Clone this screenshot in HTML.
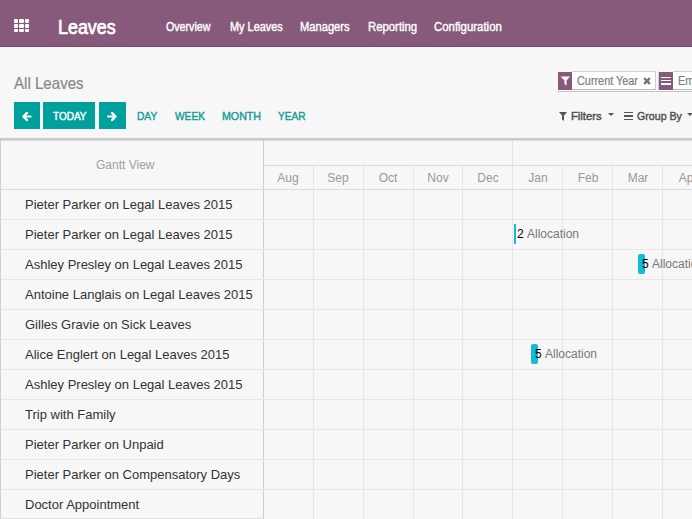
<!DOCTYPE html>
<html>
<head>
<meta charset="utf-8">
<style>
*{box-sizing:border-box;margin:0;padding:0}
html,body{width:692px;height:519px;overflow:hidden;background:#f7f7f7;font-family:"Liberation Sans",sans-serif}
.abs{position:absolute}
#nav{position:absolute;left:0;top:0;width:692px;height:47px;background:#875A7B;border-bottom:1px solid #74496a}
.sq{position:absolute;width:4.3px;height:3.5px;background:#fff;border-radius:1px}
.menu{position:absolute;top:19.2px;color:#fff;font-size:12.4px;line-height:16px;white-space:nowrap;-webkit-text-stroke:0.4px #fff}
#brand{position:absolute;left:58px;top:15px;color:#fff;font-size:20px;line-height:24px;white-space:nowrap;-webkit-text-stroke:0.7px #fff}
#title{position:absolute;left:14px;top:73px;color:#888;font-size:16.5px;line-height:20px;white-space:nowrap;-webkit-text-stroke:0.2px #888}
.btn{position:absolute;top:102px;height:27px;background:#00A09D}
.lnk{position:absolute;top:108.8px;color:#1a9c99;font-size:11.5px;line-height:14px;white-space:nowrap;-webkit-text-stroke:0.45px #1a9c99}
.facet{position:absolute;top:71px;height:19px;border:1px solid #cfcfcf;border-left:none;border-bottom-color:#bdbdbd;background:#fdfdfd}
.fic{position:absolute;top:72px;height:18px;width:14px;background:#875A7B}
.ftxt{position:absolute;top:74px;color:#808080;font-size:12px;line-height:14px;white-space:nowrap;-webkit-text-stroke:0.2px #808080;transform:scaleX(0.905);transform-origin:0 0}
.dd{position:absolute;top:109.3px;color:#505050;font-size:11.5px;line-height:14px;white-space:nowrap;-webkit-text-stroke:0.45px #505050;transform-origin:0 0}
.hl{position:absolute;height:1px}
.vl{position:absolute;width:1px}
.row{position:absolute;left:25px;color:#333;font-size:13px;line-height:16px;white-space:nowrap}
.mon{position:absolute;top:171px;width:50px;text-align:center;color:#999;font-size:12px;line-height:14px}
.bar{position:absolute;height:20px;background:#14bbd6;border-radius:2px}
.num{position:absolute;color:#000;font-size:12px;line-height:14px}
.alloc{position:absolute;color:#777;font-size:12px;line-height:14px;white-space:nowrap}
</style>
</head>
<body>
<div id="nav">
  <div class="sq" style="left:13.75px;top:19.35px"></div>
  <div class="sq" style="left:19.25px;top:19.35px"></div>
  <div class="sq" style="left:24.85px;top:19.35px"></div>
  <div class="sq" style="left:13.75px;top:24.10px"></div>
  <div class="sq" style="left:19.25px;top:24.10px"></div>
  <div class="sq" style="left:24.85px;top:24.10px"></div>
  <div class="sq" style="left:13.75px;top:28.75px"></div>
  <div class="sq" style="left:19.25px;top:28.75px"></div>
  <div class="sq" style="left:24.85px;top:28.75px"></div>
  <div id="brand" style="transform:scaleX(0.895);transform-origin:0 0">Leaves</div>
  <div class="menu" style="left:166px;transform:scaleX(0.86);transform-origin:0 0">Overview</div>
  <div class="menu" style="left:230px;transform:scaleX(0.88);transform-origin:0 0">My Leaves</div>
  <div class="menu" style="left:300px;transform:scaleX(0.9);transform-origin:0 0">Managers</div>
  <div class="menu" style="left:368px;transform:scaleX(0.915);transform-origin:0 0">Reporting</div>
  <div class="menu" style="left:434px;transform:scaleX(0.92);transform-origin:0 0">Configuration</div>
</div>

<div id="title" style="transform:scaleX(0.915);transform-origin:0 0">All Leaves</div>

<div class="btn" style="left:14px;width:26px">
  <svg class="abs" style="left:8.4px;top:9px" width="11" height="11" viewBox="0 0 11 11"><path d="M8.6 5.5H1.5M5 1.9L1.3 5.5L5 9.1" stroke="#fff" stroke-width="2.2" fill="none" stroke-linecap="round" stroke-linejoin="round"/></svg>
</div>
<div class="btn" style="left:43px;width:52px"><div class="abs" style="left:9.5px;top:6.8px;color:#fff;font-size:11.5px;line-height:14px;-webkit-text-stroke:0.45px #fff;transform:scaleX(0.87);transform-origin:0 0">TODAY</div></div>
<div class="btn" style="left:99px;width:27px">
  <svg class="abs" style="left:8px;top:9px" width="11" height="11" viewBox="0 0 11 11"><path d="M1.1 5.5H8.2M5 1.9L8.6 5.5L5 9.1" stroke="#fff" stroke-width="2.2" fill="none" stroke-linecap="round" stroke-linejoin="round"/></svg>
</div>
<div class="lnk" style="left:137px;transform:scaleX(0.885);transform-origin:0 0">DAY</div>
<div class="lnk" style="left:175px;transform:scaleX(0.885);transform-origin:0 0">WEEK</div>
<div class="lnk" style="left:221.5px;transform:scaleX(0.925);transform-origin:0 0">MONTH</div>
<div class="lnk" style="left:277.5px;transform:scaleX(0.88);transform-origin:0 0">YEAR</div>

<!-- search facets -->
<div class="hl" style="left:558px;top:91px;width:134px;background:#c4c4c4"></div>
<div class="facet" style="left:572px;width:84px"></div>
<div class="fic" style="left:558px"></div>
<svg class="abs" style="left:560px;top:76px" width="11" height="10" viewBox="0 0 11 10"><path d="M0.5 0.5H10L6.5 4.5V9.5L4.5 8V4.5Z" fill="#fff"/></svg>
<div class="ftxt" style="left:577px">Current Year</div>
<svg class="abs" style="left:643px;top:77px" width="8" height="8" viewBox="0 0 8 8"><path d="M1.2 1.2L6.8 6.8M6.8 1.2L1.2 6.8" stroke="#777" stroke-width="2.4"/></svg>
<div class="facet" style="left:673px;width:40px"></div><div class="vl" style="left:658px;top:71px;height:19px;background:#cfcfcf"></div>
<div class="fic" style="left:659px"></div>
<div class="abs" style="left:661px;top:76.8px;width:10px;height:1.4px;background:#fff"></div>
<div class="abs" style="left:661px;top:80.1px;width:10px;height:1.4px;background:#fff"></div>
<div class="abs" style="left:661px;top:83.4px;width:10px;height:1.4px;background:#fff"></div>
<div class="ftxt" style="left:678px">Employee</div>

<!-- filters -->
<svg class="abs" style="left:559px;top:112px" width="8" height="9" viewBox="0 0 8 9"><path d="M0 0H8L5 3.5V9L3 7.5V3.5Z" fill="#555"/></svg>
<div class="dd" style="left:570.5px;transform:scaleX(0.975)">Filters</div>
<svg class="abs" style="left:608px;top:113px" width="6" height="3" viewBox="0 0 6 3"><path d="M0 0H6L3 3Z" fill="#555"/></svg>
<div class="abs" style="left:624px;top:111.9px;width:9px;height:1.3px;background:#555"></div>
<div class="abs" style="left:624px;top:115.3px;width:9px;height:1.3px;background:#555"></div>
<div class="abs" style="left:624px;top:118.7px;width:9px;height:1.3px;background:#555"></div>
<div class="dd" style="left:636.5px;transform:scaleX(0.925)">Group By</div>
<svg class="abs" style="left:687px;top:113px" width="6" height="3" viewBox="0 0 6 3"><path d="M0 0H6L3 3Z" fill="#555"/></svg>

<!-- gantt -->
<div class="hl" style="left:0;top:138px;width:692px;height:2px;background:#c9c9c9"></div><div class="hl" style="left:0;top:140px;width:692px;background:#dedede"></div>
<div class="vl" style="left:0;top:140px;height:379px;background:#d0d0d0"></div>
<div class="vl" style="left:263px;top:140px;height:379px;background:#cfcfcf"></div>
<div class="abs" style="left:96px;top:158px;color:#a0a0a0;font-size:12px;line-height:14px">Gantt View</div>
<div class="hl" style="left:264px;top:165px;width:428px;background:#dcdcdc"></div>
<div class="vl" style="left:512px;top:140px;height:25px;background:#e2e2e2"></div>
<div class="mon" style="left:263px">Aug</div>
<div class="mon" style="left:313px">Sep</div>
<div class="vl" style="left:313px;top:166px;height:353px;background:#e6e6e6"></div>
<div class="mon" style="left:363px">Oct</div>
<div class="vl" style="left:363px;top:166px;height:353px;background:#e6e6e6"></div>
<div class="mon" style="left:413px">Nov</div>
<div class="vl" style="left:413px;top:166px;height:353px;background:#e6e6e6"></div>
<div class="mon" style="left:463px">Dec</div>
<div class="vl" style="left:462px;top:166px;height:353px;background:#e6e6e6"></div>
<div class="mon" style="left:513px">Jan</div>
<div class="vl" style="left:512px;top:166px;height:353px;background:#e6e6e6"></div>
<div class="mon" style="left:563px">Feb</div>
<div class="vl" style="left:562px;top:166px;height:353px;background:#e6e6e6"></div>
<div class="mon" style="left:613px">Mar</div>
<div class="vl" style="left:612px;top:166px;height:353px;background:#e6e6e6"></div>
<div class="mon" style="left:663px">Apr</div>
<div class="vl" style="left:662px;top:166px;height:353px;background:#e6e6e6"></div>
<div class="hl" style="left:1px;top:219px;width:691px;background:#e6e6e6"></div>
<div class="hl" style="left:1px;top:249px;width:691px;background:#e6e6e6"></div>
<div class="hl" style="left:1px;top:279px;width:691px;background:#e6e6e6"></div>
<div class="hl" style="left:1px;top:309px;width:691px;background:#e6e6e6"></div>
<div class="hl" style="left:1px;top:339px;width:691px;background:#e6e6e6"></div>
<div class="hl" style="left:1px;top:369px;width:691px;background:#e6e6e6"></div>
<div class="hl" style="left:1px;top:399px;width:691px;background:#e6e6e6"></div>
<div class="hl" style="left:1px;top:429px;width:691px;background:#e6e6e6"></div>
<div class="hl" style="left:1px;top:459px;width:691px;background:#e6e6e6"></div>
<div class="hl" style="left:1px;top:489px;width:691px;background:#e6e6e6"></div>
<div class="row" style="top:197px">Pieter Parker on Legal Leaves 2015</div>
<div class="row" style="top:227px">Pieter Parker on Legal Leaves 2015</div>
<div class="row" style="top:257px">Ashley Presley on Legal Leaves 2015</div>
<div class="row" style="top:287px">Antoine Langlais on Legal Leaves 2015</div>
<div class="row" style="top:317px">Gilles Gravie on Sick Leaves</div>
<div class="row" style="top:347px">Alice Englert on Legal Leaves 2015</div>
<div class="row" style="top:377px">Ashley Presley on Legal Leaves 2015</div>
<div class="row" style="top:407px">Trip with Family</div>
<div class="row" style="top:437px">Pieter Parker on Unpaid</div>
<div class="row" style="top:467px">Pieter Parker on Compensatory Days</div>
<div class="row" style="top:497px">Doctor Appointment</div>
<div class="bar" style="left:514px;top:224px;width:2px;border-radius:0"></div>
<div class="num" style="left:517px;top:227px">2</div><div class="alloc" style="left:527px;top:227px">Allocation</div>
<div class="bar" style="left:638px;top:254px;width:7px"></div>
<div class="num" style="left:642px;top:257px">5</div><div class="alloc" style="left:652px;top:257px">Allocation</div>
<div class="bar" style="left:531px;top:344px;width:7px"></div>
<div class="num" style="left:535px;top:347px">5</div><div class="alloc" style="left:545px;top:347px">Allocation</div>
<div class="hl" style="left:1px;top:189px;width:691px;background:#dcdcdc"></div>
<div class="hl" style="left:1px;top:518px;width:262px;background:#e2e2e2"></div>
</body>
</html>
